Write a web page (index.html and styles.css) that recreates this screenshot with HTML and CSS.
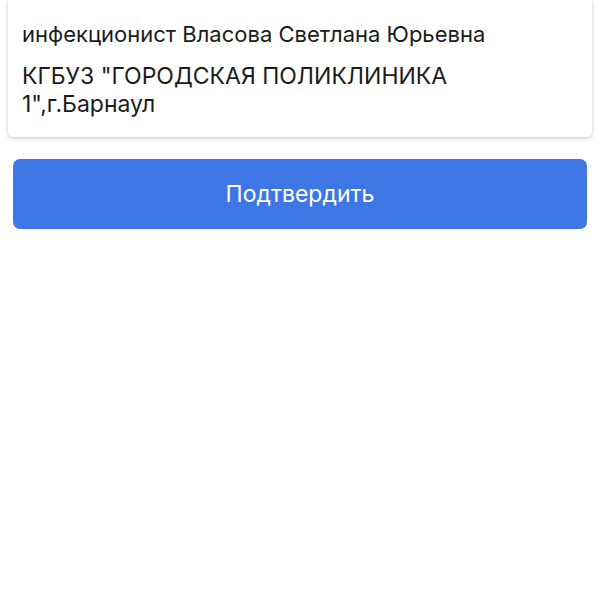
FILE: index.html
```html
<!DOCTYPE html>
<html>
  <head>
    <meta charset="utf-8">
    <link rel="stylesheet" href="styles.css">
  </head>
  <body>
    <div class="page">
      <div class="card">
        <div class="doctor">инфекционист Власова Светлана Юрьевна</div>
        <div class="clinic">КГБУЗ "ГОРОДСКАЯ ПОЛИКЛИНИКА 1",г.Барнаул</div>
      </div>
      <button class="confirm">Подтвердить</button>
    </div>
  </body>
</html>
```

FILE: styles.css
```css
html, body {
  background-color: #fff;
  margin: 0;
  padding: 0;
  height: 100%;
  font-family: Inter, "Noto Sans", sans-serif;
  color: #1b1b1b;
}
.page {
  padding: 0 8px;
}
.card {
  background: #fff;
  border-radius: 0 0 5px 5px;
  box-shadow: 0 1px 4px rgba(0, 0, 0, 0.22);
  padding: 20px 40px 19px 14px;
}
.doctor {
  font-size: 22px;
  line-height: 28px;
}
.clinic {
  font-size: 23px;
  line-height: 28px;
  margin-top: 14px;
}
.confirm {
  display: block;
  width: calc(100% - 10px);
  margin: 22px 5px 0;
  height: 70px;
  border: none;
  border-radius: 7px;
  background: #3f76e6;
  color: #fff;
  font-family: Inter, "Noto Sans", sans-serif;
  font-size: 23px;
}
```
